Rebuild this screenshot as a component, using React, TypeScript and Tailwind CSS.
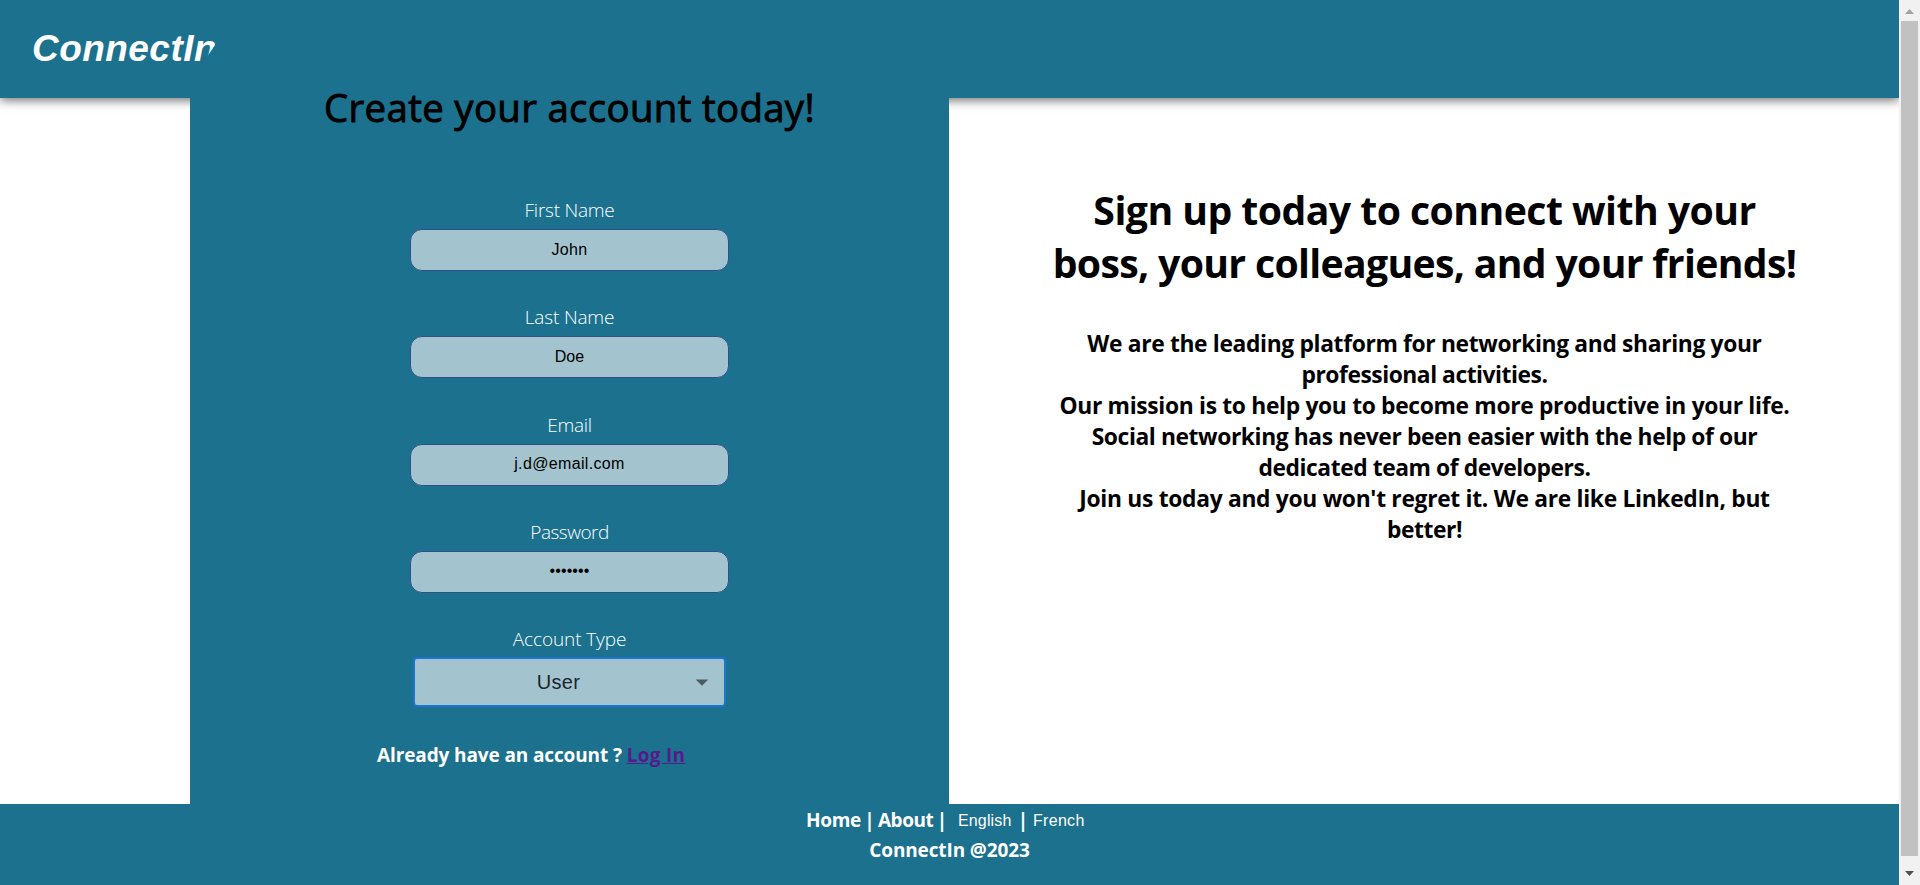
import React from "react";

function Line({ children, className }: { children: React.ReactNode; className: string }) {
  return <span className={"block whitespace-nowrap " + className}>{children}</span>;
}

const labelStyle = "h-[32px] text-[19px] font-light leading-[26px] text-white";

function Field({ label, value, labelClass, valueClass }: { label: string; value: string; labelClass: string; valueClass: string }) {
  return (
    <div className="flex h-[107.3px] flex-col items-center">
      <span className={labelStyle + " " + labelClass}>{label}</span>
      <div className={"flex h-[42px] w-[319px] items-center justify-center rounded-[12px] border border-[#31508a] bg-[#a3c4cf] pb-px font-['Liberation_Sans',sans-serif] text-[16px] text-black " + valueClass}>
        {value}
      </div>
    </div>
  );
}

export default function App() {
  return (
    <div className="flex h-[885px] w-[1920px] overflow-hidden bg-white font-['Open_Sans',sans-serif] text-black">
      <div className="flex w-[1899px] flex-col">
        <header className="h-[98px] shrink-0 bg-[#1b718e] pl-[32px] pt-[27px] shadow-[0_2px_10px_rgba(0,0,0,0.6)]">
          <div className="w-[190px] font-['Liberation_Sans',sans-serif] text-[37px] font-bold italic leading-[44px] tracking-[0.45px] text-white [clip-path:polygon(0_0,190px_0,185px_15px,175px_30px,171px_44px,0_44px)]">
            ConnectIn
          </div>
        </header>
        <main className="flex h-[706px] shrink-0">
          <section className="relative ml-[190px] flex w-[759px] flex-col items-center bg-[#1b718e]">
            <h1 className="-mt-[17px] h-[116px] whitespace-nowrap text-[38.4px] font-normal leading-[53px] tracking-[0.32px] [-webkit-text-stroke:0.9px_black]">
              Create your account today!
            </h1>
            <Field label="First Name" value="John" labelClass="tracking-[-0.25px]" valueClass="tracking-[0.3px]" />
            <Field label="Last Name" value="Doe" labelClass="tracking-[-0.15px]" valueClass="" />
            <Field label="Email" value="j.d@email.com" labelClass="tracking-[-0.25px]" valueClass="tracking-[0.35px]" />
            <Field label="Password" value="•••••••" labelClass="tracking-[-0.5px]" valueClass="tracking-[0.1px]" />
            <span className="h-[31px] text-[19px] font-light leading-[26px] tracking-[-0.1px] text-white">Account Type</span>
            <div className="flex h-[50px] w-[313px] items-center rounded-[4px] border-2 border-[#1976d2] bg-[#a3c4cf]">
              <span className="flex-1 pb-px pl-[15px] text-center font-['Liberation_Sans',sans-serif] text-[20px] tracking-[0.3px] text-[#1c2529]">User</span>
              <svg className="mr-[7px] h-[30px] w-[30px]" viewBox="0 0 24 24" fill="#4d5b60">
                <path d="M7 10l5 5 5-5z" />
              </svg>
            </div>
            <p className="mt-[33px] w-full whitespace-nowrap pl-[187px] text-[19px] font-bold leading-[30px] tracking-[-0.12px] text-white">
              Already have an account ? <a className="tracking-[0.3px] text-[#551a8b] underline">Log In</a>
            </p>
          </section>
          <section className="flex flex-1 flex-col items-center pl-[1px] pt-[85px] text-center font-bold">
            <h2 className="text-[39.2px] leading-[53px]">
              <Line className="tracking-[-0.55px]">Sign up today to connect with your</Line>
              <Line className="tracking-[-0.68px]">boss, your colleagues, and your friends!</Line>
            </h2>
            <div className="mt-[39px] text-[22.8px] leading-[31px]">
              <Line className="tracking-[-0.34px]">We are the leading platform for networking and sharing your</Line>
              <Line className="tracking-[-0.46px]">professional activities.</Line>
              <Line className="tracking-[-0.32px]">Our mission is to help you to become more productive in your life.</Line>
              <Line className="tracking-[-0.4px]">Social networking has never been easier with the help of our</Line>
              <Line className="tracking-[-0.42px]">dedicated team of developers.</Line>
              <Line className="tracking-[-0.3px]">Join us today and you won't regret it. We are like LinkedIn, but</Line>
              <Line className="tracking-[-0.4px]">better!</Line>
            </div>
          </section>
        </main>
        <footer className="flex h-[81px] flex-col items-center bg-[#1b718e] pt-px text-[19px] font-bold leading-[30px] text-white">
          <div className="flex pr-[8px]">
            <span className="w-[55px] tracking-[-0.3px]">Home</span>
            <span className="w-[17px] text-center">|</span>
            <span className="w-[56px] tracking-[-0.5px]">About</span>
            <span className="w-[16px] text-center">|</span>
            <span className="ml-[8px] w-[55px] pt-px font-['Liberation_Sans',sans-serif] text-[16px] font-normal tracking-[0.15px]">English</span>
            <span className="w-[20px] text-center">|</span>
            <span className="w-[52px] pt-px font-['Liberation_Sans',sans-serif] text-[16px] font-normal tracking-[0.3px]">French</span>
          </div>
          <span className="-mt-px tracking-[-0.12px]">ConnectIn @2023</span>
        </footer>
      </div>
      <div className="flex w-[21px] flex-col items-center bg-[#f1f1f1]">
        <svg className="h-[21px] w-[21px]" viewBox="0 0 21 21" fill="#a3a3a3">
          <path d="M6 14h9l-4.500-5z" />
        </svg>
        <div className="h-[835px] w-[17px] bg-[#c1c1c1]" />
        <svg className="h-[29px] w-[21px]" viewBox="0 0 21 29" fill="#505050">
          <path d="M6 15h9l-4.500 5z" />
        </svg>
      </div>
    </div>
  );
}
